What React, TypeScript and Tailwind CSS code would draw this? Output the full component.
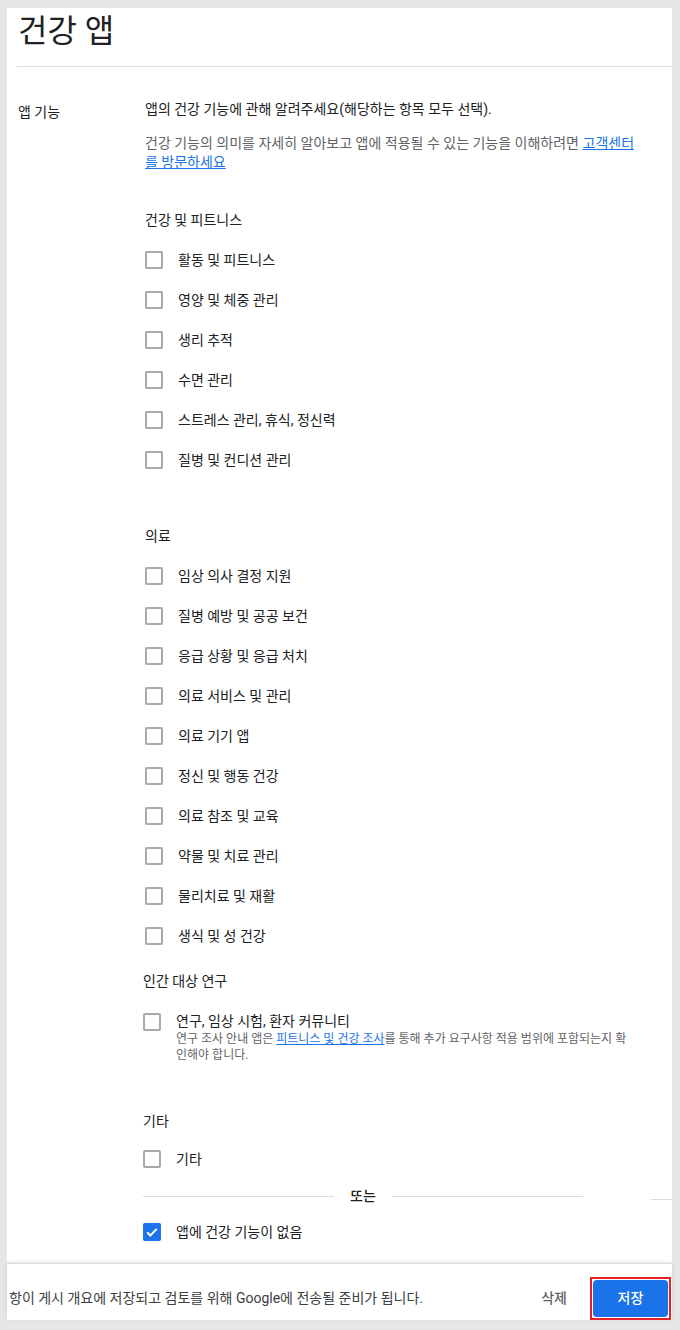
import React from 'react';

const FONT = { fontFamily: 'Roboto, "Noto Sans CJK KR", sans-serif' };

const fitness = [
  '활동 및 피트니스',
  '영양 및 체중 관리',
  '생리 추적',
  '수면 관리',
  '스트레스 관리, 휴식, 정신력',
  '질병 및 컨디션 관리',
];

const medical = [
  '임상 의사 결정 지원',
  '질병 예방 및 공공 보건',
  '응급 상황 및 응급 처치',
  '의료 서비스 및 관리',
  '의료 기기 앱',
  '정신 및 행동 건강',
  '의료 참조 및 교육',
  '약물 및 치료 관리',
  '물리치료 및 재활',
  '생식 및 성 건강',
];

const Box: React.FC<{ checked?: boolean }> = ({ checked }) =>
  checked ? (
    <span className="flex h-[18px] w-[18px] shrink-0 items-center justify-center rounded-[2px] bg-[#1a73e8]">
      <svg viewBox="0 0 18 18" className="h-[18px] w-[18px]">
        <path d="M4.2 9.4l3.1 3.1 6.5-6.6" fill="none" stroke="#fff" strokeWidth="2" />
      </svg>
    </span>
  ) : (
    <span className="block h-[18px] w-[18px] shrink-0 rounded-[2px] border-2 border-[#a9a9a9]" />
  );

const Row: React.FC<{ label: string }> = ({ label }) => (
  <div className="flex h-10 items-center">
    <Box />
    <span className="ml-[15px] text-[14px] text-[#202124]">{label}</span>
  </div>
);

const App: React.FC = () => {
  return (
    <div className="h-[1330px] bg-[#e6e6e6] pt-2 pb-[10px] pl-[7px] pr-2" style={FONT}>
      <div className="flex h-full flex-col bg-white">
        {/* Header */}
        <div className="ml-[10px] flex h-[59px] items-center border-b border-[#dadce0] pb-[13px]">
          <h1 className="ml-px text-[32px] leading-none text-[#202124]">건강 앱</h1>
        </div>

        {/* Body */}
        <div className="flex flex-1 pt-8">
          <div className="w-[138px] shrink-0 pl-[11px] pt-[3px] text-[14px] leading-5 text-[#202124]">앱 기능</div>
          <div className="w-[500px]">
            <p className="text-[14px] leading-5 text-[#202124]">앱의 건강 기능에 관해 알려주세요(해당하는 항목 모두 선택).</p>
            <p className="mt-[15px] text-[14px] leading-[19px] text-[#5f6368]">
              건강 기능의 의미를 자세히 알아보고 앱에 적용될 수 있는 기능을 이해하려면{' '}
              <a className="text-[#1a73e8] underline">고객센터를 방문하세요</a>
            </p>

            <div className="mt-[28px] flex h-10 items-center text-[14px] text-[#202124]">건강 및 피트니스</div>
            {fitness.map((f) => (
              <Row key={f} label={f} />
            ))}

            <div className="mt-[36px] flex h-10 items-center text-[14px] text-[#202124]">의료</div>
            {medical.map((f) => (
              <Row key={f} label={f} />
            ))}

            <div className="-ml-[2px]">
              <div className="mt-[5px] flex h-10 items-center text-[14px] text-[#202124]">인간 대상 연구</div>
              <div className="mt-[10px] flex items-start">
                <span className="mt-[2px]">
                  <Box />
                </span>
                <div className="ml-[15px] w-[458px]">
                  <div className="text-[14px] leading-5 text-[#202124]">연구, 임상 시험, 환자 커뮤니티</div>
                  <div className="text-[12px] leading-4 text-[#5f6368]">
                    연구 조사 안내 앱은 <a className="text-[#1a73e8] underline">피트니스 및 건강 조사</a>를 통해 추가 요구사항 적용 범위에 포함되는지 확인해야 합니다.
                  </div>
                </div>
              </div>

              <div className="mt-[38px] flex h-10 items-center text-[14px] text-[#202124]">기타</div>
              <div className="flex h-9 items-center">
                <Box />
                <span className="ml-[15px] text-[14px] text-[#202124]">기타</span>
              </div>

              <div className="flex h-[38px] items-center">
                <span className="h-px w-[191px] bg-[#dadce0]" />
                <span className="w-[58px] text-center text-[14px] font-medium text-[#202124]">또는</span>
                <span className="h-px w-[191px] bg-[#dadce0]" />
              </div>

              <div className="flex h-[34px] items-center">
                <Box checked />
                <span className="ml-[15px] text-[14px] text-[#202124]">앱에 건강 기능이 없음</span>
              </div>
            </div>
          </div>
          <div className="flex-1 pl-[6px] pt-[1100px]">
            <div className="h-px bg-[#dadce0]" />
          </div>
        </div>

        {/* Footer */}
        <div className="flex h-[57px] items-end border-t border-[#dadce0] shadow-[0_-1px_3px_rgba(60,64,67,0.15)]">
          <div className="flex h-[43px] w-full items-center">
            <span className="ml-[2px] text-[14px] text-[#3c4043]">항이 게시 개요에 저장되고 검토를 위해 Google에 전송될 준비가 됩니다.</span>
            <button className="ml-auto mr-[23px] text-[14px] font-medium text-[#5f6368]">삭제</button>
            <div className="mr-px h-[43px] border-2 border-[#e8202a] p-px">
              <button className="h-[37px] w-[75px] rounded-[4px] bg-[#1a73e8] text-[14px] font-medium text-white">저장</button>
            </div>
          </div>
        </div>
      </div>
    </div>
  );
};

export default App;
